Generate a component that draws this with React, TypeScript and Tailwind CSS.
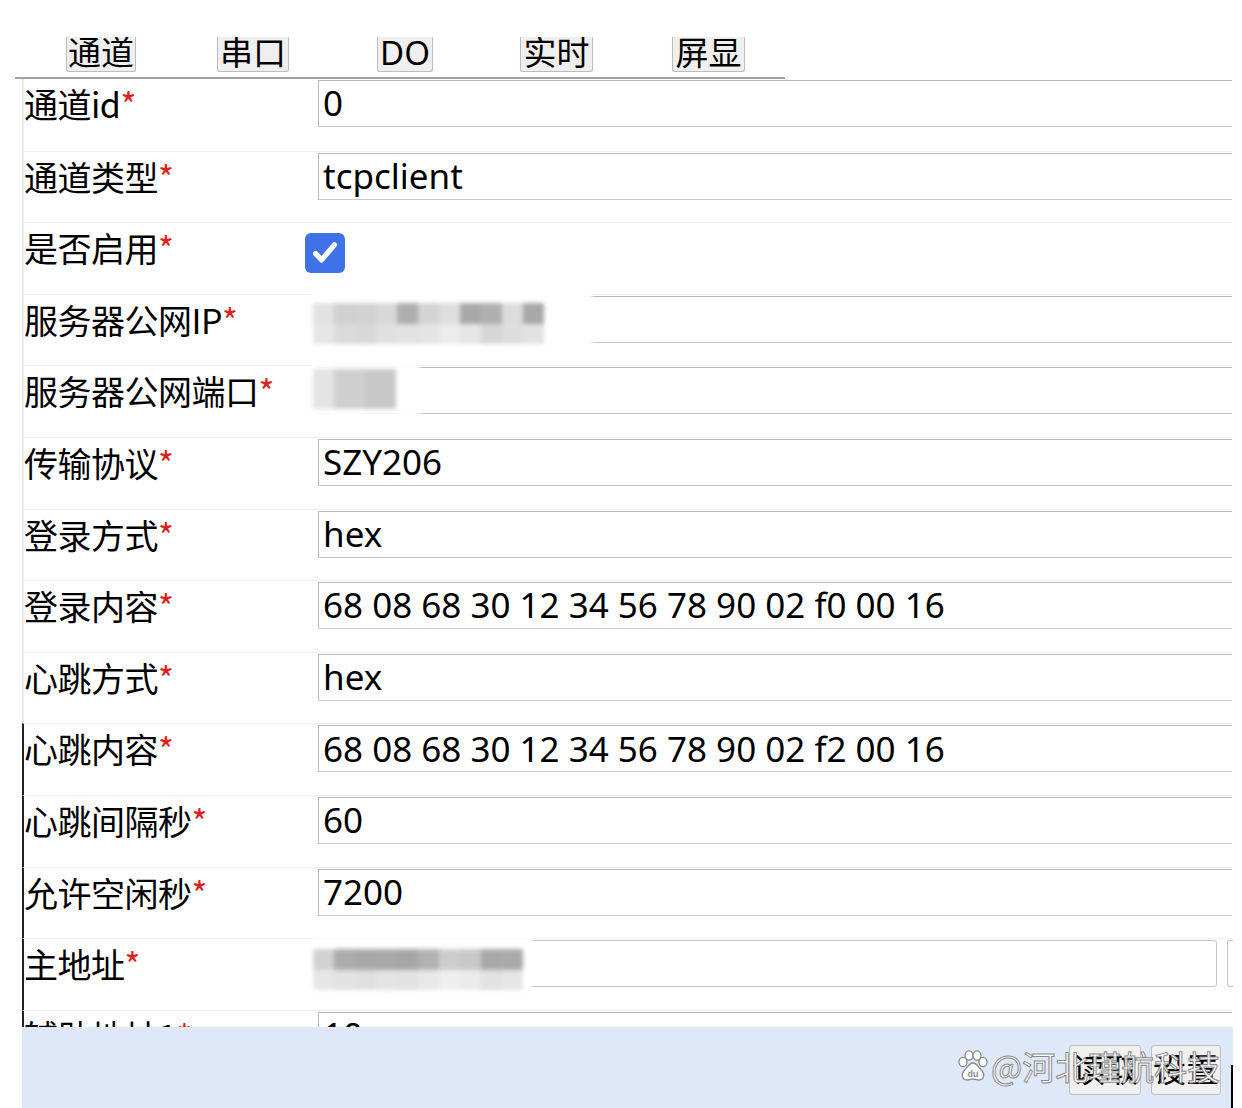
import React from 'react'

type Row = {
  label: string
  value?: string
  kind?: 'input' | 'check' | 'ip' | 'port' | 'addr'
}

const rows: Row[] = [
  { label: '通道id', value: '0' },
  { label: '通道类型', value: 'tcpclient' },
  { label: '是否启用', kind: 'check' },
  { label: '服务器公网IP', kind: 'ip' },
  { label: '服务器公网端口', kind: 'port' },
  { label: '传输协议', value: 'SZY206' },
  { label: '登录方式', value: 'hex' },
  { label: '登录内容', value: '68 08 68 30 12 34 56 78 90 02 f0 00 16' },
  { label: '心跳方式', value: 'hex' },
  { label: '心跳内容', value: '68 08 68 30 12 34 56 78 90 02 f2 00 16' },
  { label: '心跳间隔秒', value: '60' },
  { label: '允许空闲秒', value: '7200' },
  { label: '主地址', kind: 'addr' },
  { label: '辅助地址1', value: '10' },
]

const tabs = [
  { name: '通道', cls: 'ml-[66px] w-[70px]' },
  { name: '串口', cls: 'ml-[81px] w-[72px]' },
  { name: 'DO', cls: 'ml-[88px] w-[56px]' },
  { name: '实时', cls: 'ml-[87px] w-[73px]' },
  { name: '屏显', cls: 'ml-[79px] w-[73px]' },
]

// 打码区域
function Mosaic({ kind }: { kind: 'ip' | 'port' | 'addr' }) {
  if (kind === 'port') {
    return (
      <div className="absolute left-[-8px] top-[-2px] w-[110px] h-[52px] bg-white blur-[2px] pointer-events-none">
        <div className="flex mt-[5px] ml-[3px] h-[40px]">
          <div className="w-[21px] h-full bg-[#e4e4e4]" />
          <div className="w-[31px] h-full bg-[#cfcfcf]" />
          <div className="w-[31px] h-full bg-[#c8c8c8]" />
        </div>
      </div>
    )
  }
  const top =
    kind === 'ip'
      ? ['#e2e2e2', '#d0d0d0', '#d2d2d2', '#d8d8d8', '#aeaeae', '#d4d4d4', '#dedede', '#a9a9a9', '#b0b0b0', '#dcdcdc', '#a8a8a8']
      : ['#d2d2d2', '#acacac', '#a8a8a8', '#a9a9a9', '#a6a6a6', '#b2b2b2', '#cdcdcd', '#c8c8c8', '#a9a9a9', '#aaaaaa']
  const bottom =
    kind === 'ip'
      ? ['#e6e6e6', '#dadada', '#d8d8d8', '#e0e0e0', '#e2e2e2', '#e4e4e4', '#ececec', '#e6e6e6', '#d6d6d6', '#dddddd', '#e2e2e2']
      : ['#e6e6e6', '#e2e2e2', '#e0e0e0', '#e4e4e4', '#e2e2e2', '#e8e8e8', '#eeeeee', '#eaeaea', '#e2e2e2', '#e6e6e6']
  return (
    <div
      className={
        kind === 'ip'
          ? 'absolute left-[-8px] top-[-3px] w-[282px] h-[56px] bg-white blur-[2px] pointer-events-none'
          : 'absolute left-[-8px] top-[-2px] w-[222px] h-[54px] bg-white blur-[2px] pointer-events-none'
      }
    >
      <div className={kind === 'ip' ? 'ml-[3px] mt-[11px]' : 'ml-[3px] mt-[12px]'}>
        <div className="flex h-[21px]">
          {top.map((c, i) => (
            <div key={i} className="w-[21px] h-full" style={{ background: c }} />
          ))}
        </div>
        <div className="flex h-[20px]">
          {bottom.map((c, i) => (
            <div key={i} className="w-[21px] h-full" style={{ background: c }} />
          ))}
        </div>
      </div>
    </div>
  )
}

function CheckBox() {
  return (
    <div className="ml-[-13px] mt-[10px] w-[40px] h-[40px] rounded-[6px] bg-[#3e72e6] flex items-center justify-center">
      <svg width="30" height="30" viewBox="0 0 24 24" fill="none">
        <path d="M4.5 12.5l4.8 5L19.5 5.5" stroke="white" strokeWidth="4.2" strokeLinecap="round" strokeLinejoin="round" />
      </svg>
    </div>
  )
}

function Paw() {
  return (
    <svg width="34" height="34" viewBox="0 0 34 34">
      <g fill="white" stroke="#8a8a8a" strokeWidth="1.3">
        <ellipse cx="7" cy="13" rx="4" ry="4.6" />
        <ellipse cx="13" cy="6.5" rx="4" ry="4.6" />
        <ellipse cx="21" cy="6.5" rx="4" ry="4.6" />
        <ellipse cx="27" cy="13" rx="4" ry="4.6" />
        <path d="M17 14c-4 0-6 5-9 8-3 3-2 9 3 9 3 0 4-1 6-1s3 1 6 1c5 0 6-6 3-9-3-3-5-8-9-8z" />
      </g>
      <text x="17" y="28" textAnchor="middle" fontSize="9" fontWeight="700" fill="#8a8a8a" fontFamily="Liberation Sans, sans-serif">du</text>
    </svg>
  )
}

export default function App() {
  return (
    <div className="relative w-[1242px] h-[1108px] overflow-hidden bg-white text-black font-['Noto_Sans','Noto_Sans_CJK_SC',sans-serif]">
      {/* 顶部标签 */}
      <div className="mt-[37px] h-[35px] overflow-hidden flex items-end">
        {tabs.map(t => (
          <button
            key={t.name}
            className={`${t.cls} h-[40px] leading-[40px] text-[33px] text-center bg-[#efefef] border border-[#bdbdbd] rounded-[3px] shadow-[0_1px_1px_rgba(0,0,0,0.15)] shrink-0`}
          >
            {t.name}
          </button>
        ))}
      </div>
      <div className="mt-[5px] ml-[15px] w-[770px] h-[2px] bg-[#a0a0a0]" />

      {/* 表单 */}
      <div className="ml-[22px] w-[1210px]">
        {rows.map((r, i) => (
          <div
            key={r.label}
            className={`flex h-[71.6px] border-l-2 ${i >= 9 ? 'border-l-[#222]' : 'border-l-[#ececec]'} ${i > 0 ? 'border-t border-t-[#efefef]' : ''}`}
          >
            <div className="w-[294px] shrink-0 mt-px h-[47px] leading-[47px] text-[34px] tracking-[-0.5px] whitespace-nowrap font-['Noto_Sans_CJK_SC',sans-serif]">
              {r.label}
              <span className="text-[#e0201c]">*</span>
            </div>
            <div className="relative flex-1 flex">
              {r.kind === 'check' ? (
                <CheckBox />
              ) : r.kind === 'addr' ? (
                <>
                  <input
                    readOnly
                    value=""
                    className="mt-px w-[899px] h-[47px] border border-[#c4c4c4] rounded-[3px] bg-white outline-none"
                  />
                  <div className="mt-px ml-[10px] w-[6px] h-[47px] border border-r-0 border-[#c4c4c4] rounded-l-[3px]" />
                  <Mosaic kind="addr" />
                </>
              ) : (
                <>
                  <input
                    readOnly
                    value={r.value ?? ''}
                    className="mt-px w-full h-[47px] px-[4px] text-[35px] border border-r-0 border-[#b8b8b8] border-b-[#c8c8c8] bg-white outline-none"
                  />
                  {(r.kind === 'ip' || r.kind === 'port') && <Mosaic kind={r.kind} />}
                </>
              )}
            </div>
          </div>
        ))}
      </div>

      {/* 底部操作栏 */}
      <div className="absolute left-[22px] top-[1027px] w-[1211px] h-[81px] bg-[#dfe8f8] flex justify-end">
        <button className="mt-[18px] w-[72px] h-[50px] text-[33px] leading-[48px] bg-[#f0f0f0] border border-[#c0c0c0] rounded-[3px]">
          读取
        </button>
        <button className="mt-[18px] ml-[10px] w-[70px] h-[50px] text-[33px] leading-[48px] bg-[#f0f0f0] border border-[#c0c0c0] rounded-[3px]">
          设置
        </button>
        <div className="ml-[10px] self-end w-[2px] h-[43px] bg-black" />
      </div>

      {/* 水印 */}
      <div className="absolute left-[956px] top-[1045px] flex items-center gap-[1px] pointer-events-none">
        <Paw />
        <span className="text-[33px] leading-[42px] text-white font-['Noto_Sans_CJK_SC',sans-serif] [-webkit-text-stroke:1px_#8a8a8a]">
          @河北瑾航科技
        </span>
      </div>
    </div>
  )
}
